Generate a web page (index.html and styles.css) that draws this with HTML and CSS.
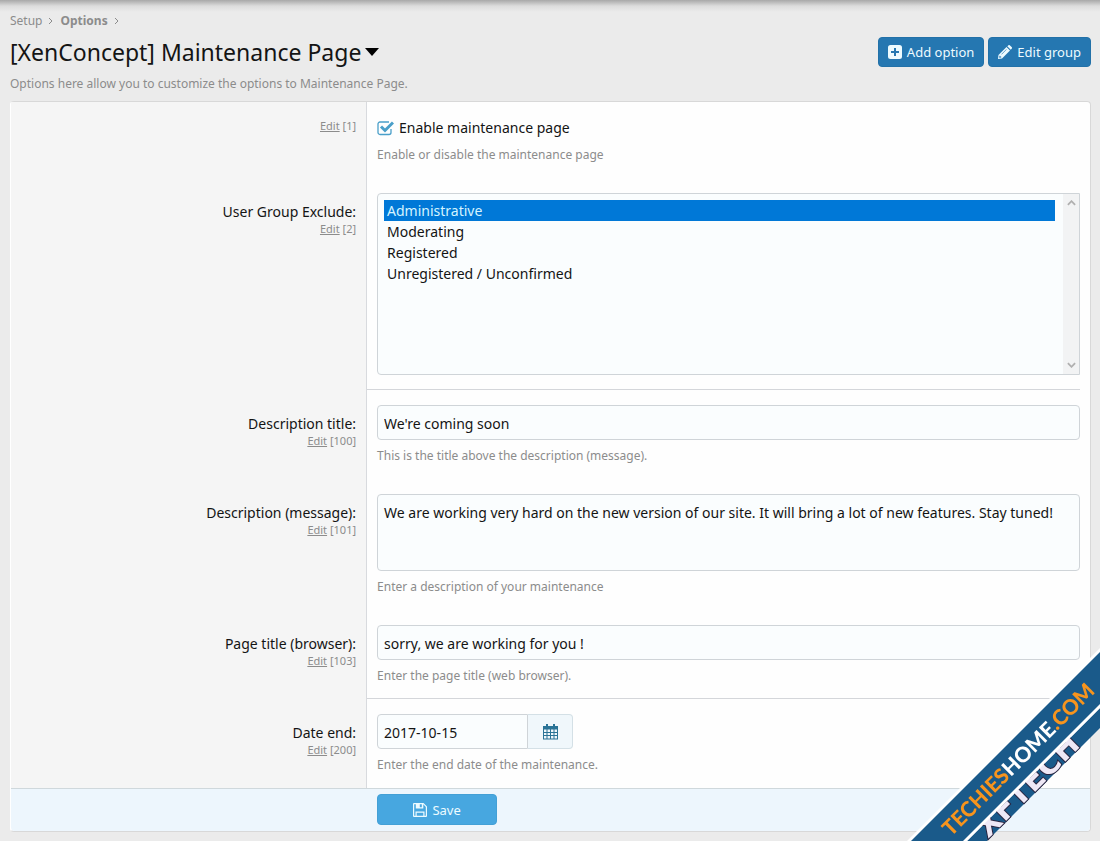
FILE: index.html
```html
<!DOCTYPE html>
<html lang="en">
<head>
  <meta charset="UTF-8">
  <meta name="viewport" content="width=device-width, initial-scale=1.0">
  <title>[XenConcept] Maintenance Page</title>
  <link rel="stylesheet" href="styles.css">
</head>
<body>
  <div class="page">
    <nav class="breadcrumbs">
      <a href="#">Setup</a>
      <svg class="chevron" viewBox="0 0 6 8"><path d="M1 1l3 3-3 3"/></svg>
      <a href="#" class="current">Options</a>
      <svg class="chevron" viewBox="0 0 6 8"><path d="M1 1l3 3-3 3"/></svg>
    </nav>

    <header class="page-header">
      <h1>
        <a href="#">[XenConcept] Maintenance Page
          <svg class="caret" viewBox="0 0 14 8"><path d="M0 0h14L7 8z"/></svg>
        </a>
      </h1>
      <div class="page-actions">
        <button type="button" class="button">
          <svg class="icon" viewBox="0 0 14 14"><path fill-rule="evenodd" d="M2.5 0h9A2.5 2.5 0 0 1 14 2.500v9a2.500 2.500 0 0 1-2.500 2.500h-9A2.500 2.500 0 0 1 0 11.500v-9A2.500 2.500 0 0 1 2.500 0zM6 3v3H3v2h3v3h2V8h3V6H8V3z"/></svg>
          Add option
        </button>
        <button type="button" class="button">
          <svg class="icon" viewBox="0 0 14 14"><path fill-rule="evenodd" d="M8.500 2l3.500 3.500L4 13.500 0 14l.5-4zM9.300 1.200L10.200.4a1.300 1.300 0 0 1 1.800 0l1.600 1.600a1.300 1.300 0 0 1 0 1.800l-.8.900zM1.500 10.800l-.3 2 2-.3v-.9H2.300v-.8zM3.300 9.200l.4.400 5-5-.4-.4z"/></svg>
          Edit group
        </button>
      </div>
    </header>
    <p class="page-description">Options here allow you to customize the options to Maintenance Page.</p>

    <form class="block">
      <div class="row">
        <div class="row-label row-label--plain">
          <span class="hint"><a href="#">Edit</a> [1]</span>
        </div>
        <div class="row-field">
          <label class="choice"><input type="checkbox" checked> Enable maintenance page</label>
          <p class="explain">Enable or disable the maintenance page</p>
        </div>
      </div>

      <div class="row">
        <div class="row-label">
          <label for="groups">User Group Exclude:</label>
          <span class="hint"><a href="#">Edit</a> [2]</span>
        </div>
        <div class="row-field row-field--last">
          <div class="list-box">
            <select id="groups" class="input" multiple size="8">
              <option selected>Administrative</option>
              <option>Moderating</option>
              <option>Registered</option>
              <option>Unregistered / Unconfirmed</option>
            </select>
            <div class="list-scroll">
              <svg viewBox="0 0 10 6"><path d="M1 5l4-4 4 4"/></svg>
              <svg viewBox="0 0 10 6"><path d="M1 1l4 4 4-4"/></svg>
            </div>
          </div>
        </div>
      </div>

      <div class="row">
        <div class="row-label">
          <label for="desc-title">Description title:</label>
          <span class="hint"><a href="#">Edit</a> [100]</span>
        </div>
        <div class="row-field">
          <input id="desc-title" class="input" type="text" value="We're coming soon">
          <p class="explain">This is the title above the description (message).</p>
        </div>
      </div>

      <div class="row">
        <div class="row-label">
          <label for="desc-message">Description (message):</label>
          <span class="hint"><a href="#">Edit</a> [101]</span>
        </div>
        <div class="row-field">
          <textarea id="desc-message" class="input" rows="3">We are working very hard on the new version of our site. It will bring a lot of new features. Stay tuned!</textarea>
          <p class="explain">Enter a description of your maintenance</p>
        </div>
      </div>

      <div class="row">
        <div class="row-label">
          <label for="page-title">Page title (browser):</label>
          <span class="hint"><a href="#">Edit</a> [103]</span>
        </div>
        <div class="row-field row-field--last">
          <input id="page-title" class="input" type="text" value="sorry, we are working for you !">
          <p class="explain">Enter the page title (web browser).</p>
        </div>
      </div>

      <div class="row">
        <div class="row-label">
          <label for="date-end">Date end:</label>
          <span class="hint"><a href="#">Edit</a> [200]</span>
        </div>
        <div class="row-field">
          <div class="input-group">
            <input id="date-end" class="input" type="text" value="2017-10-15">
            <button type="button" class="input-group-button" aria-label="Pick a date">
              <svg class="calendar" viewBox="0 0 15 16"><path fill-rule="evenodd" d="M3 0h2v2h5V0h2v2h3v13.500H0V2h3zM1 5.500V8h2.500V5.500zm3.500 0V8H7V5.500zm3.500 0V8h2.500V5.500zm3.500 0V8H14V5.500zM1 9v2h2.500V9zm3.500 0v2H7V9zM8 9v2h2.500V9zm3.500 0v2H14V9zM1 12v2.500h2.500V12zm3.500 0v2.500H7V12zM8 12v2.500h2.500V12zm3.500 0v2.500H14V12z"/></svg>
            </button>
          </div>
          <p class="explain">Enter the end date of the maintenance.</p>
        </div>
      </div>

      <div class="submit-row">
        <button type="submit" class="button button--save">
          <svg class="icon" viewBox="0 0 14 14"><path fill-rule="evenodd" d="M1 0h9.500L14 3.500V13a1 1 0 0 1-1 1H1a1 1 0 0 1-1-1V1a1 1 0 0 1 1-1zM1.200 1.200v11.600h1.300V8.500h9v4.300h1.300V4L10.300 1.200V5.500H2.800V1.200zM6.800 1.200v3h2v-3zM3.700 9.700v3.100h6.600V9.700z"/></svg>
          Save
        </button>
      </div>
    </form>
  </div>

  <svg class="ribbon" viewBox="0 0 200 200">
    <path class="ribbon-band" d="M67 200L200 67v20L87 200z"/>
    <text class="ribbon-sub" transform="translate(88 198) rotate(-45)">XFTECH</text>
    <path class="ribbon-edge" d="M7 200L200 7v60L67 200z"/>
    <path class="ribbon-band" d="M11 200L200 11v52L63 200z"/>
    <text class="ribbon-text" transform="translate(51 196) rotate(-45)"><tspan class="accent">TECHIES</tspan>HOME<tspan class="accent">.COM</tspan></text>
  </svg>
</body>
</html>
```
FILE: styles.css
```css
* {
  box-sizing: border-box;
}

body {
  margin: 0;
  font-family: "Noto Sans", "Open Sans", sans-serif;
  font-size: 14px;
  line-height: 20px;
  color: #141414;
  background: linear-gradient(#a8a8a8, #dcdcdc 6px, #ebebeb 12px) no-repeat #ebebeb;
}

a {
  color: inherit;
}

p {
  margin: 0;
}

button,
input,
select,
textarea {
  font: inherit;
  color: inherit;
}

.page {
  padding: 11px 9px 9px 10px;
}

/* Header */
.breadcrumbs {
  display: flex;
  align-items: center;
  gap: 6px;
  font-size: 12px;
  color: #8c8c8c;
}

.breadcrumbs a {
  text-decoration: none;
}

.breadcrumbs .current {
  font-weight: bold;
}

.chevron {
  width: 6px;
  height: 8px;
  fill: none;
  stroke: #8c8c8c;
}

.page-header {
  display: flex;
  justify-content: space-between;
  align-items: center;
  height: 41px;
}

h1 {
  margin: 0;
  font-size: 23px;
  font-weight: normal;
  line-height: 32px;
}

h1 a {
  display: flex;
  align-items: center;
  gap: 4px;
  text-decoration: none;
}

.caret {
  width: 14px;
  height: 8px;
}

.page-actions {
  display: flex;
  gap: 4px;
}

.button {
  display: inline-flex;
  align-items: center;
  justify-content: center;
  gap: 5px;
  height: 30px;
  padding: 1px 9px 0;
  font-size: 13px;
  color: #edfbff;
  background: #2577b1;
  border: 1px solid #2271a8;
  border-radius: 4px;
  cursor: pointer;
}

.icon {
  width: 14px;
  height: 14px;
  fill: currentColor;
}

.page-description {
  padding: 2px 0 7px;
  font-size: 12px;
  color: #8c8c8c;
}

/* Form block */
.block {
  background: #fefefe;
  border: 1px solid #d8d8d8;
  border-left-color: #fff;
  border-radius: 4px;
}

.row {
  display: flex;
}

.row-label {
  flex: 0 0 33%;
  padding: 25px 10px 0;
  line-height: 18px;
  text-align: right;
  background: #f5f5f5;
  border-right: 1px solid #d8dade;
}

.row-label--plain {
  padding-top: 16px;
}

.row-label label {
  display: block;
}

.hint {
  display: block;
  font-size: 11px;
  line-height: 16px;
  color: #8c8c8c;
}

.row-field {
  flex: 1;
  min-width: 0;
  margin-right: 10px;
  padding: 15px 0 14px 10px;
}

.row-field--last {
  padding-bottom: 13px;
  border-bottom: 1px solid #d4d6da;
}

.explain {
  margin-top: 6px;
  font-size: 12px;
  line-height: 19px;
  color: #8c8c8c;
}

.choice {
  display: flex;
  align-items: center;
  gap: 5px;
  line-height: 22px;
}

.choice input {
  appearance: none;
  width: 17px;
  height: 16px;
  margin: 0;
  background: url("data:image/svg+xml,%3Csvg xmlns='http://www.w3.org/2000/svg' viewBox='0 0 17 16' fill='none' stroke='%234a9fc9'%3E%3Cpath stroke-width='1.300' d='M14 9v3.500a2 2 0 0 1-2 2H3a2 2 0 0 1-2-2V4a2 2 0 0 1 2-2h9'/%3E%3Cpath stroke-width='3' d='M4 6.500l4 4L16 2.500'/%3E%3C/svg%3E") no-repeat;
}

.input {
  display: block;
  width: 100%;
  height: 35px;
  padding: 7px 6px 5px;
  line-height: 21px;
  background: #fafdfe;
  border: 1px solid #cfd4d8;
  border-radius: 4px;
  outline: 0;
}

textarea.input {
  height: 77px;
  resize: none;
}

/* List box with its own scroll track */
.list-box {
  position: relative;
  padding-bottom: 1px;
}

select.input {
  height: 182px;
  padding: 6px 24px 6px 6px;
  border-radius: 4px 0 0 4px;
  scrollbar-width: none;
}

select.input option {
  min-height: 21px;
  padding: 1px 3px 0;
  line-height: 20px;
}

select.input option:checked {
  color: #d5f4ff;
  background: linear-gradient(#0078d7, #0078d7);
}

.list-scroll {
  position: absolute;
  top: 1px;
  right: 1px;
  bottom: 2px;
  display: flex;
  flex-direction: column;
  justify-content: space-between;
  align-items: center;
  width: 16px;
  padding: 6px 0;
  background: #f2f3f4;
}

.list-scroll svg {
  width: 9px;
  height: 6px;
  fill: none;
  stroke: #b0b0b0;
  stroke-width: 2;
}

.input-group {
  display: flex;
}

.input-group .input {
  width: 151px;
  border-radius: 4px 0 0 4px;
}

.input-group-button {
  width: 45px;
  padding: 0;
  background: #f0f7fb;
  border: 1px solid #d4e0e6;
  border-left: 0;
  border-radius: 0 4px 4px 0;
}

.calendar {
  display: block;
  width: 15px;
  height: 16px;
  margin: 0 auto;
  fill: #2a7396;
}

.submit-row {
  padding: 5px 10px 6px calc(33% + 10px);
  background: #edf6fd;
  border-top: 1px solid #cfd8dc;
  border-radius: 0 0 4px 4px;
}

.button--save {
  width: 120px;
  height: 31px;
  background: #47a7e0;
  border-color: #43a0d6;
}

/* Corner ribbon */
.ribbon {
  position: fixed;
  right: 0;
  bottom: 0;
  width: 200px;
  height: 200px;
  pointer-events: none;
}

.ribbon-edge {
  fill: #fff;
}

.ribbon-band {
  fill: #1a5a8a;
}

.ribbon-text {
  font-family: Lato, sans-serif;
  font-size: 21px;
  font-weight: 900;
  fill: #fff;
}

.ribbon-text .accent {
  fill: #f7941d;
}

.ribbon-sub {
  font-family: "DejaVu Sans", sans-serif;
  font-size: 30px;
  font-weight: bold;
  fill: #eee8f6;
  stroke: #2a2540;
  stroke-width: 2;
  paint-order: stroke;
}
```
